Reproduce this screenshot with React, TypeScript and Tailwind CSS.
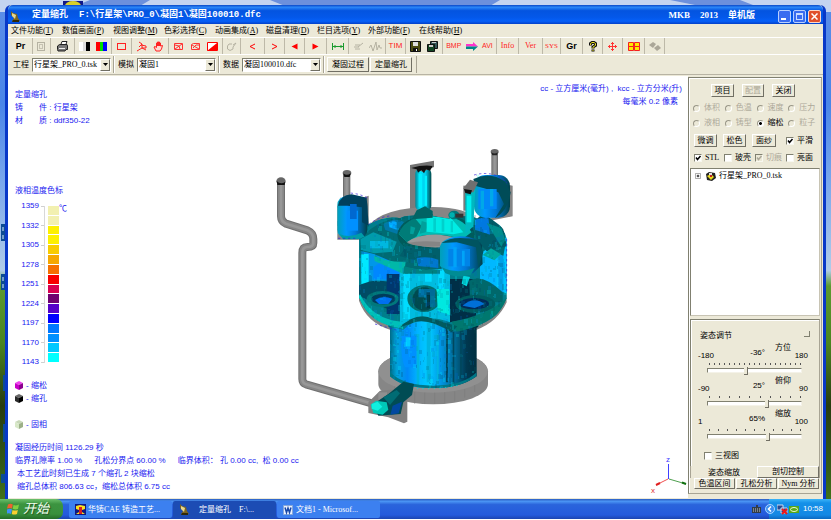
import React from "react";

const SONG = "font-[family-name:'Liberation_Serif','Noto_Sans_CJK_SC',serif]";
const HEI = "font-[family-name:'Liberation_Sans','Noto_Sans_CJK_SC',sans-serif]";
const MONO = "font-[family-name:'Liberation_Mono','Noto_Sans_CJK_SC',monospace]";

/* ---------- toolbar ---------- */

function Group({ className, children }: { className: string; children: React.ReactNode }) {
  return (
    <div className={`flex h-full shrink-0 items-center justify-around border-r border-[#bdb9a8] px-[1px] ${className}`}>
      {children}
    </div>
  );
}

function Tool({ label, children }: { label: string; children: React.ReactNode }) {
  return (
    <button type="button" aria-label={label} className="flex h-[14px] items-center justify-center">
      {children}
    </button>
  );
}

function Ico({ w = 11, children }: { w?: number; children: React.ReactNode }) {
  return (
    <svg width={w} height="11" viewBox={`0 0 ${w} 11`} fill="none">
      {children}
    </svg>
  );
}

function TextTool({ text, className }: { text: string; className: string }) {
  return (
    <button type="button" className={`leading-[14px] ${className}`}>
      {text}
    </button>
  );
}

function Toolbar() {
  return (
    <div className="flex h-[17px] items-center border-t border-white pl-[1px] text-[8px]">
      <Group className="w-[24px]">
        <TextTool text="Pr" className={`text-[9px] font-bold text-black ${HEI}`} />
      </Group>
      <Group className="w-[18px]">
        <Tool label="页面">
          <Ico>
            <rect x="1.5" y="1.5" width="7" height="8" stroke="#b5b2a2" />
            <rect x="3.5" y="3.5" width="3" height="4" stroke="#c5c2b2" />
          </Ico>
        </Tool>
      </Group>
      <Group className="w-[24px]">
        <Tool label="打印">
          <Ico>
            <path d="M3.5 4.5 5 .5h5L8.5 4.500" fill="#fff" stroke="#222" />
            <path d="M.5 5 2.500 3.500H10L10.500 5V8.500H9L8 10H1L.5 8.500Z" fill="#777" stroke="#222" />
            <path d="M2 7.500h6" stroke="#eee" />
          </Ico>
        </Tool>
      </Group>
      <Group className="w-[37px]">
        <Tool label="灰度">
          <Ico>
            <path d="M0 1h4v9H0z" fill="#fff" />
            <path d="M4 1h3v9H4z" fill="#ddd" />
            <path d="M7 1h4v9H7z" fill="#000" />
          </Ico>
        </Tool>
        <Tool label="彩色">
          <Ico>
            <path d="M0 1h4v9H0z" fill="#f00" />
            <path d="M4 1h4v9H4z" fill="#0d0" />
            <path d="M7 1h4v9H7z" fill="#00f" />
          </Ico>
        </Tool>
      </Group>
      <Group className="w-[20px]">
        <Tool label="窗口">
          <Ico>
            <rect x="1.5" y="2.500" width="8" height="6" stroke="#f22" />
          </Ico>
        </Tool>
      </Group>
      <Group className="w-[37px]">
        <Tool label="旋转">
          <Ico>
            <path d="M3 1l3 2-3 3M6 3v4L1 10M6 7l4 2M5 4l5 1v2H6" stroke="#f22" />
          </Ico>
        </Tool>
        <Tool label="平移">
          <Ico>
            <path d="M3 10 1 6l1-.5 1.500 1V2h1v3V1h1v4V1h1v4V2h1v3l2-.5L8.500 8 7 10Z" fill="#ffd8d0" stroke="#f22" />
          </Ico>
        </Tool>
      </Group>
      <Group className="w-[54px]">
        <Tool label="剖面一">
          <Ico>
            <path d="M1.500 2.500h8v6h-8zM2 8l7-5M2 4l4 1 1 3" stroke="#f33" />
          </Ico>
        </Tool>
        <Tool label="剖面二">
          <Ico>
            <path d="M1.500 8.500v-5l2-1h6v6zM2 4l7 4M3 7l3-3h3" stroke="#f33" />
          </Ico>
        </Tool>
        <Tool label="剖面三">
          <Ico>
            <path d="M.5 1.500h10v8H.5z" fill="#fff" stroke="#f00" />
            <path d="M10 2v8H0Z" fill="#f00" />
          </Ico>
        </Tool>
      </Group>
      <Group className="w-[18px]">
        <Tool label="刷新">
          <Ico>
            <path d="M6 3H3L1.500 5v3L4 9.500 7 8V6l3-4-3 2" stroke="#b5b2a2" />
          </Ico>
        </Tool>
      </Group>
      <Group className="w-[24px]">
        <Tool label="上一步">
          <Ico w={7}>
            <path d="M6 3 1 5.500 6 8" stroke="#f00" />
          </Ico>
        </Tool>
      </Group>
      <Group className="w-[20px]">
        <Tool label="下一步">
          <Ico w={7}>
            <path d="M1 3l5 2.500L1 8" stroke="#f00" />
          </Ico>
        </Tool>
      </Group>
      <Group className="w-[20px]">
        <Tool label="倒放">
          <Ico w={7}>
            <path d="M6.500 2.500v6L.5 5.500Z" fill="#f00" />
          </Ico>
        </Tool>
      </Group>
      <Group className="w-[22px]">
        <Tool label="播放">
          <Ico w={7}>
            <path d="M.5 2.500v6l6-3Z" fill="#f00" />
          </Ico>
        </Tool>
      </Group>
      <Group className="w-[22px]">
        <Tool label="测距">
          <Ico w={12}>
            <path d="M.5 2v7M11.500 2v7M1 5.500h10M3 4v3M9 4v3" stroke="#1a9a2e" />
          </Ico>
        </Tool>
      </Group>
      <Group className="w-[37px]">
        <Tool label="标注">
          <Ico>
            <path d="M10 2 5 6M2 4h5M1 6h5M2 8h5" stroke="#b5b2a2" />
          </Ico>
        </Tool>
        <Tool label="曲线">
          <Ico w={13}>
            <path d="M0 7 2 4l2 6 3-9 1 8 2-5 1 3h2" stroke="#b5b2a2" />
          </Ico>
        </Tool>
      </Group>
      <Group className="w-[20px]">
        <TextTool text="TIM" className={`text-[#f22] ${HEI}`} />
      </Group>
      <Group className="w-[37px]">
        <Tool label="保存">
          <Ico>
            <path d="M.5.5h10v10H.5z" fill="#4a4a10" stroke="#111" />
            <path d="M3 1h5v4H3z" fill="#ddd" />
            <path d="M3 7h5v3H3z" fill="#111" />
            <path d="M6 8h1v2H6z" fill="#fff" />
          </Ico>
        </Tool>
        <Tool label="全部保存">
          <Ico>
            <path d="M3.500 3V.5h7v7H8" fill="#355" stroke="#111" />
            <path d="M.5 3.500h7v7h-7z" fill="#142" stroke="#111" />
            <path d="M2 4h4v2H2zM5 1h4v1H5z" fill="#ccc" />
          </Ico>
        </Tool>
      </Group>
      <Group className="w-[54px]">
        <TextTool text="BMP" className={`text-[7px] text-[#f22] ${HEI}`} />
        <Tool label="转换">
          <Ico w={12}>
            <path d="M0 3h7V1l5 4.500H0z" fill="#f3c" />
            <path d="M0 5.500h12L7 10V8H0z" fill="#088" />
          </Ico>
        </Tool>
        <TextTool text="AVI" className={`text-[7px] text-[#f22] ${HEI}`} />
      </Group>
      <Group className="w-[22px]">
        <TextTool text="Info" className={`text-[#f22] ${SONG}`} />
      </Group>
      <Group className="w-[24px]">
        <TextTool text="Ver" className={`text-[#f22] ${SONG}`} />
      </Group>
      <Group className="w-[18px]">
        <TextTool text="SYS" className={`text-[7px] text-[#f22] ${SONG}`} />
      </Group>
      <Group className="w-[22px]">
        <TextTool text="Gr" className={`text-[9px] font-bold text-black ${HEI}`} />
      </Group>
      <Group className="w-[20px]">
        <Tool label="帮助">
          <Ico w={8}>
            <path d="M1.500 4.500V2.500L3 1.500h2l1.500 1v2L4 6v1.500M4 8.500v2" stroke="#111" strokeWidth="3" />
            <path d="M1.500 4V2.500L3 1.500h2l1.500 1v2L4 6v1.500M4 9v1" stroke="#e8e020" />
          </Ico>
        </Tool>
      </Group>
      <Group className="w-[20px]">
        <Tool label="居中">
          <Ico w={9}>
            <path d="M4.500 1v9M0 5.500h9M3 2.500h3M3 8.500h3M1.500 4v3M7.500 4v3" stroke="#f33" />
          </Ico>
        </Tool>
      </Group>
      <Group className="w-[22px]">
        <Tool label="四视图">
          <Ico w={12}>
            <path d="M.5 1.500h5v4h-5zM6.500 1.500h5v4h-5zM.5 5.500h5v4h-5zM6.500 5.500h5v4h-5z" fill="#ffe800" stroke="#f52020" />
          </Ico>
        </Tool>
      </Group>
      <Group className="w-[20px]">
        <Tool label="图层">
          <Ico w={12}>
            <path d="M4 1 7 3 4 7 0 4Z" fill="#aaa698" />
            <path d="M9 4l3 3-4 3-3-3Z" fill="#aaa698" />
          </Ico>
        </Tool>
      </Group>
    </div>
  );
}

/* ---------- selector row ---------- */

function Picker({ id, label, value }: { id: string; label: string; value: string }) {
  return (
    <div className="flex h-full w-[105px] shrink-0 items-center gap-[3px] border-r border-[#a8a494] pl-[4px] shadow-[1px_0_0_#fff]">
      <label htmlFor={id} className="w-4 shrink-0">
        {label}
      </label>
      <div className="relative">
        <select
          id={id}
          className={`block h-[14px] w-[79px] appearance-none border border-b-white border-l-[#808070] border-r-white border-t-[#808070] bg-white pl-[1px] text-[8px] leading-[12px] text-black outline-none ${SONG}`}
        >
          <option>{value}</option>
        </select>
        <span className="pointer-events-none absolute right-[1px] top-[1px] flex h-3 w-[10px] items-center justify-center border border-b-[#716f64] border-l-white border-r-[#716f64] border-t-white bg-[#ece9d8]">
          <svg width="5" height="3" viewBox="0 0 5 3">
            <path d="M0 0h5L2.500 3Z" fill="#000" />
          </svg>
        </span>
      </div>
    </div>
  );
}

function Raised({ children, className = "", disabled = false }: { children: React.ReactNode; className?: string; disabled?: boolean }) {
  return (
    <button
      type="button"
      disabled={disabled}
      className={`shrink-0 whitespace-nowrap border border-b-[#716f64] border-l-white border-r-[#716f64] border-t-white bg-[#ece9d8] text-center disabled:text-[#aca899] ${className}`}
    >
      {children}
    </button>
  );
}

/* ---------- model ---------- */

const OUTLINE =
  "M297 300 L232 296 Q228 190 240 176 Q262 160 322 174 L326 256 Q380 226 420 238 L470 214 L466 96 Q488 88 514 98 L512 212 L520 232 L570 240 Q560 214 600 216 L614 220 L616 156 L645 148 L642 108 Q690 98 738 130 Q756 160 752 205 Q730 236 700 240 Q732 262 740 300 L740 478 Q712 545 650 566 L650 712 Q600 748 520 748 Q430 748 390 712 L390 566 Q322 540 297 475 Z";

const SHADES = ["#003a5c", "#005a64", "#00809a", "#0090f0", "#00c8ff", "#00ffff", "#009a9a", "#004c4c", "#0060c8"];

function makeFacets() {
  let seed = 17;
  const next = () => {
    seed = (seed * 16807) % 2147483647;
    return seed / 2147483647;
  };
  return Array.from({ length: 1500 }, () => ({
    x: Math.round(225 + next() * 530),
    y: Math.round(90 + next() * 660),
    w: Math.round(3 + next() * 7),
    h: Math.round(4 + next() * 14),
    c: SHADES[Math.floor(next() * SHADES.length)],
  }));
}

const FACETS = makeFacets();

function Pipe({ d, w }: { d: string; w: number }) {
  return (
    <g fill="none" strokeLinejoin="round">
      <path d={d} stroke="#707070" strokeWidth={w} />
      <path d={d} stroke="#878787" strokeWidth={w - 6} />
      <path d={d} stroke="#989898" strokeWidth={w / 3} />
    </g>
  );
}

function CastingModel() {
  return (
    <svg className="absolute left-[252px] top-[63px]" width="270" height="290" viewBox="0 0 810 870" role="img" aria-label="行星架">
      <defs>
        <clipPath id="body">
          <path d={OUTLINE} />
        </clipPath>
        <linearGradient id="column" x1="390" x2="650" y1="0" y2="0" gradientUnits="userSpaceOnUse">
          <stop offset="0" stopColor="#006c88" />
          <stop offset=".08" stopColor="#00a4dc" />
          <stop offset=".2" stopColor="#0088f8" />
          <stop offset=".32" stopColor="#00b4ff" />
          <stop offset=".45" stopColor="#00ccff" />
          <stop offset=".58" stopColor="#0098e8" />
          <stop offset=".74" stopColor="#006c98" />
          <stop offset=".88" stopColor="#003850" />
          <stop offset="1" stopColor="#003040" />
        </linearGradient>
        <linearGradient id="knob" x1="0" x2="1" y1="0" y2="0">
          <stop offset="0" stopColor="#00a0b8" />
          <stop offset=".3" stopColor="#0098ff" />
          <stop offset=".6" stopColor="#0078d8" />
          <stop offset="1" stopColor="#004048" />
        </linearGradient>
        <linearGradient id="rod" x1="0" x2="1" y1="0" y2="0">
          <stop offset="0" stopColor="#00889a" />
          <stop offset=".3" stopColor="#00e8ff" />
          <stop offset=".65" stopColor="#00c8e8" />
          <stop offset="1" stopColor="#004848" />
        </linearGradient>
      </defs>

      <Pipe w={24} d="M63 128 V232 Q63 248 78 254 L142 274 Q160 282 160 300 V312 Q160 324 142 324 Q127 324 127 342 V720 Q127 732 138 736 L348 797" />
      <ellipse cx="63" cy="126" rx="14" ry="11" fill="#666" />
      <path d="M50 126q12 12 26 2l-2 10H52Z" fill="#111" />
      <Pipe w={22} d="M260 104 V176" />
      <ellipse cx="261" cy="102" rx="13" ry="9" fill="#666" />
      <path d="M250 103q10 9 22 0l-3 11h-16Z" fill="#111" />
      <Pipe w={20} d="M704 40 V122" />
      <ellipse cx="704" cy="38" rx="12" ry="8" fill="#666" />
      <path d="M694 40q10 7 19 0l-2 9h-14Z" fill="#222" />

      <path d="M232 200 L326 170 V270 L300 302 H232Z" fill="#858585" />
      <path d="M700 130 L758 140 V232 L690 245Z" fill="#858585" />
      <path d="M450 78 H490 V232 L450 222Z" fill="#7c7c7c" />
      <path d="M610 140 H630 V215 H610Z" fill="#7c7c7c" />
      <path d="M325 262 Q365 205 520 204 Q620 206 650 240 L730 270 L740 490 Q712 550 650 572 L390 572 Q320 550 297 485 L297 320Z" fill="#858585" />
      <path d="M355 697 a164.500 64 0 0 1 329 0 V735 a164.500 61 0 0 1 -329 0Z" fill="#868686" />
      <ellipse cx="519" cy="697" rx="164" ry="64" fill="#909090" />
      <g stroke="#7c7c7c" strokeWidth="2">
        <path d="M404 742v42M434 754v37M464 759v35M494 761v34M524 761v34M554 760v33M584 757v30M614 750v26M644 738v21" />
      </g>

      <g clipPath="url(#body)">
        <path d="M385 540H655V752H385Z" fill="url(#column)" />
        <path d="M425 590h45v95h-35q-14-30-10-95Z" fill="#0090ff" />
        <path d="M500 550h12v180h-12zM470 585h8v155h-8zM530 585h6v150h-6z" fill="#00b4e0" />
        <path d="M437 595h14v27h-14z" fill="#00c8ff" />
        <path d="M558 570h6v160h-6zM578 560h5v175h-5zM600 560h6v160h-6z" fill="#004860" />
        <path d="M390 700q40 40 130 40t130-40v52H390Z" fill="#007888" />

        <path d="M290 280Q340 235 420 232H620Q740 250 745 310V490Q700 560 580 578Q555 542 500 542Q455 542 430 572Q330 550 290 480Z" fill="#007f8c" />
        <path d="M304 330h116v95H304z" fill="#0098e8" />
        <path d="M304 345h22v90h-22z" fill="#00e8ff" />
        <path d="M340 385l40-28 38 24v40h-78z" fill="#0088ff" />
        <path d="M296 440Q350 410 418 440V525L360 500 296 470Z" fill="#004c64" />
        <path d="M380 405h38v120h-38z" fill="#00386e" />
        <ellipse cx="368" cy="480" rx="48" ry="24" fill="#00787c" />
        <ellipse cx="370" cy="480" rx="36" ry="16" fill="#003c5c" />
        <path d="M345 483q22-16 52-4l-12 16h-28z" fill="#0070f0" />
        <path d="M300 465Q335 540 425 548L430 570Q320 550 290 485Z" fill="#00c0b8" />
        <path d="M420 385h150v165q-70-28-150 8z" fill="#00bce0" />
        <path d="M430 395h20v145h-20zM495 398h20v30h-20zM535 390h18v60h-18z" fill="#00dcff" />
        <ellipse cx="492" cy="479" rx="50" ry="40" fill="#007070" />
        <ellipse cx="492" cy="480" rx="34" ry="35" fill="#004c50" />
        <path d="M475 450h50v55h-28v-30h-22z" fill="#006c98" />
        <path d="M500 460h10v48h-10z" fill="#003844" />
        <path d="M530 450h38v78l-35-12z" fill="#00e8e0" />
        <path d="M570 420h78v115l-78 15z" fill="#003048" />
        <path d="M648 330L742 295V465L690 440Z" fill="#00c4ff" />
        <path d="M660 360l50-25v105l-50-15z" fill="#00b8ff" />
        <path d="M715 320h15v140h-15z" fill="#00a0e8" />
        <path d="M628 425q40-22 100 35v30H630z" fill="#00686c" />
        <ellipse cx="646" cy="495" rx="60" ry="27" fill="#005c60" />
        <ellipse cx="642" cy="494" rx="45" ry="17" fill="#002c58" />
        <path d="M608 500q34-30 66-5l-30 12z" fill="#0070d8" />
        <path d="M610 410l20 4-10 28-15-8z" fill="#00d8e0" />
        <path d="M575 548Q685 528 742 475L740 495Q690 560 590 578Z" fill="#007870" />
        <path d="M420 565Q470 515 520 540L592 562 575 580 Q510 540 470 548Z" fill="#005c60" />

        <path d="M302 300Q350 235 470 228H590Q700 242 738 308L730 350 680 330 648 355 540 390Q460 402 400 370L342 345 300 335Z" fill="#006c74" />
        <path d="M370 255q32-22 62-6l-20 36-36-12z" fill="#0078a8" />
        <path d="M386 250q15-6 24 0v22l-22-7z" fill="#00a8ff" />
        <path d="M302 300l38-20 70 28-12 30-55 5-40-10z" fill="#009cac" />
        <path d="M330 306h55v22h-55z" fill="#00b8e0" />
        <ellipse cx="528" cy="287" rx="116" ry="63" fill="#005c5c" />
        <path d="M440 320q40 12 105 4v50h-45l-82-23z" fill="#00606c" />
        <path d="M470 358q30-8 65 4v25l-60-6z" fill="#0078d0" />
        <path d="M342 350q50 22 95 18l-5 38-88-40z" fill="#00b8a8" />
        <path d="M432 382q45 14 108 10v12H430z" fill="#008080" />
        <path d="M640 250l30-28 60 45 10 55-60 15-30-35z" fill="#005c68" />
        <path d="M645 242l40-10 5 55-45-15z" fill="#0078e0" />
        <path d="M680 252l44 15 12 36-12 20z" fill="#008c8c" />
        <path d="M668 348l25-20 30 18-20 18z" fill="#00a8a0" />

        <g opacity=".2" shapeRendering="crispEdges">
          {FACETS.map((f, i) => (
            <rect key={i} x={f.x} y={f.y} width={f.w} height={f.h} fill={f.c} />
          ))}
        </g>

        <path d="M416 285Q445 228 530 228Q610 232 634 280L605 302Q555 280 485 290L442 310Z" fill="#00bcb4" />
        <path d="M416 285Q428 252 465 238L485 262 470 292 442 310Z" fill="#007c78" />
        <path d="M485 246l20 6-8 28-18 4zM452 262l14 4-6 20-10-2z" fill="#00a09c" />
        <path d="M500 234h70l40 46-30 6-80-8z" fill="#00ece4" />
        <path d="M520 238h8v40h-8zM545 240h8v38h-8zM572 246h7v34h-7z" fill="#00d0cc" />
        <path d="M440 310Q475 284 540 287L602 298 540 325Q490 328 440 310Z" fill="#999" />
        <path d="M442 312Q480 304 540 309v13q-60 5-98-10z" fill="#858585" />
      </g>

      <rect x="232" y="172" width="90" height="126" rx="26" fill="url(#knob)" />
      <path d="M234 200Q240 168 275 166L320 176 326 260 306 250V205L262 200Z" fill="#00405c" />
      <path d="M260 215h34v60h-34z" fill="#0090ff" />
      <path d="M270 195h20v45h-20z" fill="#0068d0" />
      <path d="M238 285q30 14 66-4l10 12-20 8h-45z" fill="#009ca8" />

      <rect x="466" y="90" width="48" height="124" rx="14" fill="url(#rod)" />
      <path d="M476 105h10v98h-10zM494 110h7v90h-7z" fill="#00f0ff" />
      <path d="M470 214l25-12 23 14v20l-62 5z" fill="#006464" />
      <path d="M450 78 L522 65 V84 L488 98 L450 86Z" fill="#747474" />
      <path d="M454 87q34-10 64-6l-8 14-12-4-6 12-8-10-10 8-4-10Z" fill="#111" />

      <rect x="642" y="108" width="108" height="128" rx="34" fill="url(#knob)" />
      <path d="M640 120Q690 95 735 128L752 160Q745 215 705 238L732 195 715 160 645 140Z" fill="#004c58" />
      <path d="M655 150h55v60h-55z" fill="#0088f8" />
      <path d="M662 155h10v55h-10zM690 150h10v52h-10z" fill="#00a8e8" />
      <path d="M616 158L646 150 640 262 616 285Z" fill="#00b8c0" />
      <path d="M620 170h14v80h-14z" fill="#00f0f0" />
      <path d="M610 148L630 122 654 130 640 160 616 160Z" fill="#707070" />
      <path d="M612 150l24 4-4 12-16-4z" fill="#111" />

      <ellipse cx="582" cy="228" rx="17" ry="13" fill="#00787c" />
      <ellipse cx="576" cy="228" rx="8" ry="8" fill="#00b0b0" />
      <path d="M586 224h24v12h-24z" fill="#333" />

      <path d="M540 322Q548 296 600 292Q650 292 666 318L668 375 640 402Q600 418 558 402L540 380Z" fill="url(#knob)" />
      <path d="M545 312Q580 286 655 304L670 340 655 385 648 325 590 310Z" fill="#005460" />
      <path d="M565 330h65v52h-65z" fill="#0084e8" />
      <path d="M580 325h10v60h-10zM606 335h8v45h-8z" fill="#00a4f8" />
      <path d="M546 385q45 22 98 2l-12 20q-40 12-76-4z" fill="#008c94" />

      <g fill="none" stroke="#3a20d8" strokeWidth="2" strokeDasharray="7 8">
        <path d="M272 162l25 4 25 10M326 256q34-24 66-25M642 108q60-16 100 24M740 300v165M234 298h60M345 555l70 20" />
      </g>
      <g stroke="#00e8e0" strokeWidth="3" strokeDasharray="3 14">
        <path d="M420 742q90 16 180-4" fill="none" />
      </g>

      <path d="M325 790L360 755 442 748V848L432 853 385 835 325 822Z" fill="#808080" />
      <path d="M355 760h26v45h-26z" fill="#909090" />
      <path d="M340 795L385 765 410 745 430 728 462 735 456 768 430 790 422 825 355 830Z" fill="#004c54" />
      <path d="M370 775l40-22 10 10-30 35z" fill="#006c74" />
      <path d="M398 800l28-12-10 35-25 4z" fill="#0048a0" />
      <path d="M332 797L348 785 380 790 385 812 368 827 340 822Z" fill="#00c8b8" />
      <path d="M335 795l18-7 14 15-14 12-18-6z" fill="#10f0e0" />
    </svg>
  );
}

/* ---------- drawing area ---------- */

const SCALE_LABELS = ["1359", "1332", "1305", "1278", "1251", "1224", "1197", "1170", "1143"];
const SCALE_CELLS = [
  "bg-[#f2f0b0]",
  "bg-[#f2f0b0]",
  "bg-[#fdf000]",
  "bg-[#fdf000]",
  "bg-[#f8cc00]",
  "bg-[#f5a800]",
  "bg-[#f57000]",
  "bg-[#f80000]",
  "bg-[#d80050]",
  "bg-[#700070]",
  "bg-[#5500c8]",
  "bg-[#0000ff]",
  "bg-[#0078ff]",
  "bg-[#0090ff]",
  "bg-[#00c8ff]",
  "bg-[#00ffff]",
];

function Cube({ top, left, right }: { top: string; left: string; right: string }) {
  return (
    <svg width="8" height="9" viewBox="0 0 8 9">
      <path d="M0 2 4 0l4 2-4 2Z" fill={top} />
      <path d="M0 2l4 2v5L0 7Z" fill={left} />
      <path d="M8 2 4 4v5l4-2Z" fill={right} />
    </svg>
  );
}

function Canvas() {
  return (
    <main className={`relative min-w-0 flex-1 overflow-hidden bg-white pb-1 pl-[7px] text-[8px] leading-[13px] text-[#2020f0] ${HEI}`}>
      <CastingModel />
      <div className="flex justify-between pr-[6px]">
        <div className="pt-[12px]">
          <p>定量缩孔</p>
          <p className="flex">
            <span className="w-6">铸</span>件 : 行星架
          </p>
          <p className="flex">
            <span className="w-6">材</span>质 : ddf350-22
          </p>
        </div>
        <div className="pt-[6px] text-right">
          <p>cc - 立方厘米(毫升) ,&nbsp; kcc - 立方分米(升)</p>
          <p className="pr-1">每毫米 0.2 像素</p>
        </div>
      </div>
      <p className="mt-[57px]">液相温度色标</p>
      <div className="mt-[5px] flex">
        <div className="flex h-[164px] w-6 flex-col justify-between text-right leading-[8px]">
          {SCALE_LABELS.map((t) => (
            <span key={t}>{t}</span>
          ))}
        </div>
        <div className="ml-[2px] flex h-[157px] w-1 flex-col justify-between self-center border-r border-[#d8d8d8]">
          {SCALE_LABELS.map((t) => (
            <span key={t} className="h-px bg-[#d0d0d0]" />
          ))}
        </div>
        <div className="ml-[3px] flex h-[156px] w-[11px] flex-col gap-px self-center">
          {SCALE_CELLS.map((c, i) => (
            <span key={i} className={`flex-1 ${c}`} />
          ))}
        </div>
        <span>℃</span>
      </div>
      <div className="mt-[13px]">
        <p className="flex items-center gap-[3px]">
          <Cube top="#f040f0" left="#c800c8" right="#8c0090" />- 缩松
        </p>
        <p className="flex items-center gap-[3px]">
          <Cube top="#666" left="#2a2a2a" right="#000" />- 缩孔
        </p>
        <p className="mt-[13px] flex items-center gap-[3px]">
          <Cube top="#c8d8b8" left="#d8e8c8" right="#9cb088" />- 固相
        </p>
      </div>
      <div className="mt-[10px]">
        <p>凝固经历时间 1126.29 秒</p>
        <p className="flex gap-3">
          <span>临界孔隙率 1.00 %</span>
          <span>孔松分界点 60.00 %</span>
          <span>临界体积： 孔 0.00 cc, &nbsp;松 0.00 cc</span>
        </p>
        <p className="pl-[2px]">本工艺此时刻已生成 7 个缩孔 2 块缩松</p>
        <p className="pl-[2px]">缩孔总体积 806.63 cc，缩松总体积 6.75 cc</p>
      </div>
      <svg className="absolute bottom-0 right-0" width="40" height="48" viewBox="0 0 40 48" fill="none">
        <path d="M20.500 14v15" stroke="#4040ff" />
        <path d="M20 29 8 35" stroke="#f05050" />
        <path d="M12 33l-4 2" stroke="#e02020" strokeWidth="2" />
        <path d="M21 29l17 5" stroke="#50a050" />
        <path d="M34 32.500l4 1.500" stroke="#107010" strokeWidth="2" />
        <text x="18" y="12" fontSize="8" fill="#4040ff">
          z
        </text>
        <text x="3" y="43" fontSize="8" fill="#e03030">
          x
        </text>
      </svg>
    </main>
  );
}

/* ---------- control panel ---------- */

function Radio({ label, checked = false, disabled = true }: { label: string; checked?: boolean; disabled?: boolean }) {
  return (
    <label className={`flex items-center gap-1 whitespace-nowrap ${disabled ? "text-[#aca899]" : "text-black"}`}>
      <input
        type="radio"
        name="field"
        defaultChecked={checked}
        disabled={disabled}
        className="size-[7px] shrink-0 appearance-none rounded-full border border-b-white border-l-[#9a9788] border-r-white border-t-[#9a9788] bg-white checked:bg-[radial-gradient(circle,#000_35%,#fff_45%)] disabled:bg-[#ece9d8]"
      />
      {label}
    </label>
  );
}

function Check({ label, checked = false, disabled = false }: { label: string; checked?: boolean; disabled?: boolean }) {
  return (
    <label className={`flex items-center gap-[3px] whitespace-nowrap ${disabled ? "text-[#aca899]" : "text-black"}`}>
      <span className="relative block size-2 shrink-0">
        <input
          type="checkbox"
          defaultChecked={checked}
          disabled={disabled}
          className="peer block size-2 appearance-none border border-b-[#f8f8f0] border-l-[#808070] border-r-[#f8f8f0] border-t-[#808070] bg-white disabled:bg-[#ece9d8]"
        />
        <svg className="pointer-events-none absolute inset-0 hidden peer-checked:block" width="8" height="8" viewBox="0 0 8 8" fill="none">
          <path d="M2 3.500 3.500 5.500 6.500 2" stroke="currentColor" strokeWidth="1.500" />
        </svg>
      </span>
      {label}
    </label>
  );
}

function Slider({ id, name, min, max, value, unit, ticks }: { id: string; name: string; min: number; max: number; value: number; unit: string; ticks: number }) {
  return (
    <div className="h-[33px]">
      <div className="flex h-4 items-start leading-[8px]">
        <span className="w-[26px] pl-[7px] pt-2">{min}</span>
        <output htmlFor={id} className="w-[48px] pt-[5px] text-right">
          {value}
          {unit}
        </output>
        <label htmlFor={id} className="ml-[10px] whitespace-nowrap">
          {name}
        </label>
        <span className="ml-auto pr-[11px] pt-2">{max}</span>
      </div>
      <div className="ml-[18px] mr-[18px] mt-[3px] flex justify-between">
        {Array.from({ length: ticks }, (_, i) => (
          <span key={i} className="h-[2px] w-px bg-[#555]" />
        ))}
      </div>
      <input
        id={id}
        type="range"
        min={min}
        max={max}
        defaultValue={value}
        className="ml-[16px] mt-[3px] block h-[5px] w-[95px] appearance-none border border-b-[#f4f2e8] border-l-[#808070] border-r-[#f4f2e8] border-t-[#808070] bg-white [&::-webkit-slider-thumb]:h-2 [&::-webkit-slider-thumb]:w-1 [&::-webkit-slider-thumb]:appearance-none [&::-webkit-slider-thumb]:border-b [&::-webkit-slider-thumb]:border-r [&::-webkit-slider-thumb]:border-[#716f64] [&::-webkit-slider-thumb]:bg-[#ece9d8]"
      />
    </div>
  );
}

function ControlPanel() {
  return (
    <aside
      className={`mb-1 mr-[1px] mt-[1px] flex w-[134px] shrink-0 flex-col border border-b-[#a8a494] border-l-[#808070] border-r-[#a8a494] border-t-[#808070] bg-[#ece9d8] px-[1px] pb-1 text-[8px] leading-[10px] shadow-[inset_1px_1px_0_#fff] ${SONG}`}
    >
      <div className="mt-[6px] flex justify-center gap-2 pr-1">
        <Raised className="h-[13px] w-[23px]">项目</Raised>
        <Raised className="h-[13px] w-[22px]" disabled>
          配置
        </Raised>
        <Raised className="h-[13px] w-[23px]">关闭</Raised>
      </div>
      <div className="mt-[6px] grid grid-cols-4 gap-y-[5px] pl-[3px]">
        <Radio label="体积" />
        <Radio label="色温" />
        <Radio label="速度" />
        <Radio label="压力" />
        <Radio label="液相" />
        <Radio label="铸型" />
        <Radio label="缩松" checked disabled={false} />
        <Radio label="粒子" />
      </div>
      <div className="mt-[6px] flex items-center gap-[6px] pl-1">
        <Raised className="h-[13px] w-[23px]">微调</Raised>
        <Raised className="h-[13px] w-[23px]">松色</Raised>
        <Raised className="h-[13px] w-[24px]">面纱</Raised>
        <div className="pl-[4px]">
          <Check label="平滑" checked />
        </div>
      </div>
      <div className="mt-[6px] grid grid-cols-[30px_31px_31px_1fr] pl-[4px]">
        <Check label="STL" checked />
        <Check label="玻壳" />
        <Check label="切痕" checked disabled />
        <Check label="亮面" />
      </div>
      <div className="mt-[5px] min-h-[142px] flex-1 border border-b-[#c8c4b4] border-l-[#808070] border-r-[#c8c4b4] border-t-[#808070] bg-white pl-1 pt-[2px]">
        <div className="flex items-center">
          <button type="button" aria-label="展开" className="mr-[5px]">
            <svg width="6" height="6" viewBox="0 0 7 7" fill="none">
              <path d="M.5.5h6v6h-6z" stroke="#999" />
              <path d="M2 3.500h3M3.500 2v3" stroke="#000" />
            </svg>
          </button>
          <svg width="10" height="9" viewBox="0 0 10 9" className="mr-[3px]">
            <path d="M0 2 3 0l6 1 1 5-4 3-5-1Z" fill="#222" />
            <path d="M1 4l4-2 3 3-3 3Z" fill="#e8d820" />
            <path d="M3 1h3v2H3z" fill="#ddd" />
            <path d="M4 3h2v2H4z" fill="#c02020" />
          </svg>
          <span>行星架_PRO_0.tsk</span>
        </div>
      </div>
      <div className="mt-[3px] border border-b-0 border-l-[#808070] border-r-[#a8a494] border-t-[#808070] pb-[5px] shadow-[inset_1px_1px_0_#fff]">
        <div className={HEI}>
          <div className="flex h-[20px] justify-between pl-[9px] pr-[9px] pt-[11px]">
            <h2>姿态调节</h2>
            <span className="size-[6px] border-b border-r border-[#808070]" />
          </div>
          <div className="mt-[4px] flex flex-col">
            <Slider id="yaw" name="方位" min={-180} max={180} value={-36} unit="°" ticks={19} />
            <Slider id="pitch" name="俯仰" min={-90} max={90} value={25} unit="°" ticks={10} />
            <Slider id="zoom" name="缩放" min={1} max={100} value={65} unit="%" ticks={11} />
          </div>
          <div className="mt-[8px] flex pl-[13px]">
            <Check label="三视图" />
          </div>
        </div>
      </div>
      <div className="flex shrink-0 items-start border-l border-r border-[#a8a494] pl-[17px]">
        <button type="button" className="w-8 whitespace-nowrap pt-[2px]">
          姿态缩放
        </button>
        <Raised className="ml-auto h-[12px] w-[62px]">剖切控制</Raised>
      </div>
      <div className="flex shrink-0 justify-between pl-[4px] pr-[1px]">
        <Raised className="h-[11px] w-[41px] leading-[9px]">色温区间</Raised>
        <Raised className="h-[11px] w-[41px] leading-[9px]">孔松分析</Raised>
        <Raised className="h-[11px] w-[41px] leading-[9px]">Nym 分析</Raised>
      </div>
    </aside>
  );
}

/* ---------- window frame ---------- */

const MENU = ["文件功能", "数值画面", "视图调整", "色彩选择", "动画集成", "磁盘清理", "栏目选项", "外部功能", "在线帮助"];
const KEYS = ["T", "P", "M", "C", "A", "D", "Y", "F", "H"];

function AppGlyph() {
  return (
    <svg width="10" height="11" viewBox="0 0 10 11">
      <path d="M1 0 3 2l4 1 1 4 2 3H2l2-3-3-3Z" fill="#7a6420" />
      <path d="M2 2l4 2-1 4-3-3Z" fill="#e8d890" />
      <path d="M3 9h6v2H2Z" fill="#302808" />
    </svg>
  );
}

function TitleBar() {
  return (
    <header
      className={`flex h-[19px] items-center rounded-t-[5px] bg-[linear-gradient(#0a48c8,#2a86f8_12%,#0454e0_30%,#0458ea_65%,#0660f8_85%,#0440c8)] pl-[2px] pt-[3px] text-[9px] font-bold text-white ${MONO}`}
    >
      <AppGlyph />
      <h1 className="ml-[12px] flex gap-[11px] whitespace-pre">
        <span>定量缩孔</span>
        <span>F:\行星架\PRO_0\凝固1\凝固100010.dfc</span>
      </h1>
      <div className={`ml-auto mr-[23px] flex gap-[10px] text-[9px] ${SONG}`}>
        <span>MKB</span>
        <span>2013</span>
        <span>单机版</span>
      </div>
      <div className="mr-[2px] flex gap-[2px]">
        <button type="button" aria-label="最小化" className="flex size-[13px] items-end rounded-[2px] border border-[#b8d0ff] bg-[#3a6cf0] p-[2px]">
          <span className="h-[2px] w-[5px] bg-white" />
        </button>
        <button type="button" aria-label="最大化" className="flex size-[13px] items-center justify-center rounded-[2px] border border-[#b8d0ff] bg-[#3a6cf0]">
          <span className="size-[7px] border border-t-2 border-[#c8dcff]" />
        </button>
        <button type="button" aria-label="关闭" className="flex size-[13px] items-center justify-center rounded-[2px] border border-[#ffd8c8] bg-[#e0502c]">
          <svg width="7" height="7" viewBox="0 0 7 7">
            <path d="M.5.5l6 6M6.500.5l-6 6" stroke="#fff" strokeWidth="1.500" />
          </svg>
        </button>
      </div>
    </header>
  );
}

function Taskbar() {
  return (
    <footer
      className={`flex h-[21px] shrink-0 items-stretch border-b border-white bg-[linear-gradient(#2a5cc0,#4a94f4_12%,#2a64dc_28%,#245adc_80%,#1c44b0)] text-[8px] text-white ${SONG}`}
    >
      <button
        type="button"
        className={`flex w-[63px] shrink-0 items-center gap-1 rounded-r-[7px] bg-[linear-gradient(#6cc06c,#3c9440_25%,#38903c_75%,#246c28)] pl-[7px] text-[13px] italic leading-[14px] text-[#f0fff0] [text-shadow:1px_1px_1px_#205020] ${HEI}`}
      >
        <svg width="12" height="12" viewBox="0 0 12 12">
          <path d="M1 1.500Q3.500 0 5.800 1.500L5 5.500Q3 4.300 0 5.500Z" fill="#f06030" />
          <path d="M6.500 2Q9 3 12 1.500L11 6Q8.500 7 5.700 5.800Z" fill="#80d040" />
          <path d="M0 6.500Q3 5 5 6.500L4 11Q2 9.500-1 11Z" fill="#4090f8" />
          <path d="M5.500 7Q8 8 10.800 7L10 11Q7 12 4.800 11Z" fill="#f8d030" />
        </svg>
        开始
      </button>
      <div className="flex min-w-0 items-stretch gap-[1px] pb-[1px] pl-[6px] pt-[2px]">
        <button type="button" className="flex w-[103px] items-center gap-[2px] whitespace-pre rounded-[2px] bg-[#3c80f0] pl-[6px]">
          <svg width="11" height="11" viewBox="0 0 11 11">
            <path d="M0 0h11v11H0z" fill="#101880" />
            <path d="M1 2l4-1 5 1v3L7 6v2l3 2H1l3-2V6L1 5Z" fill="#f8e020" />
            <path d="M4 3h3v7H4z" fill="#d82020" />
          </svg>
          华铸CAE 铸造工艺...
        </button>
        <button type="button" className="flex w-[103px] items-center gap-[10px] whitespace-pre rounded-[2px] bg-[#1c4cb4] pl-[6px]">
          <AppGlyph />
          <span>定量缩孔    F:\...</span>
        </button>
        <button type="button" className="flex w-[103px] items-center gap-[3px] whitespace-pre rounded-[2px] bg-[#3c80f0] pl-[6px]">
          <svg width="10" height="10" viewBox="0 0 10 10" fill="none">
            <path d="M.5.5h9v9h-9z" fill="#e8f0ff" stroke="#88a8d8" />
            <path d="M2 2.500l1.500 5L5 3l1.500 4.500L8 2.500" stroke="#1848a8" strokeWidth="1.500" />
          </svg>
          <span>文档1 - Microsof...</span>
        </button>
      </div>
      <div className="ml-auto flex items-center">
        <svg width="9" height="8" viewBox="0 0 9 8" className="mr-[8px]">
          <path d="M0 2h9v6H0z" fill="#333c48" />
          <path d="M1 4h7M1 6h7" stroke="#ccc" strokeDasharray="1 1" />
          <path d="M4 0h2v2H4z" fill="#333c48" />
        </svg>
        <div className="flex h-full w-[62px] items-center bg-[linear-gradient(#3cb4f8,#1490e8_20%,#1488e4_80%,#0c68c0)]">
          <button type="button" aria-label="显示隐藏的图标" className="-ml-1 mr-[2px]">
            <svg width="10" height="10" viewBox="0 0 10 10" fill="none">
              <circle cx="5" cy="5" r="4.500" fill="#3c90f0" stroke="#a8d4ff" />
              <path d="M6 2.500 3.500 5 6 7.500" stroke="#fff" strokeWidth="1.500" />
            </svg>
          </button>
          <svg width="11" height="11" viewBox="0 0 11 11" className="mr-[1px]">
            <path d="M0 1h6v5H0zM4 4h6v5H4z" fill="#284890" stroke="#c8d8f0" />
            <path d="M5 5l5 5M10 5l-5 5" stroke="#f01818" strokeWidth="2" />
          </svg>
          <svg width="10" height="7" viewBox="0 0 10 7" className="mr-[4px]">
            <path d="M0 0h10v7H0z" fill="#58a818" />
            <ellipse cx="5" cy="3.500" rx="3.500" ry="2" fill="none" stroke="#e8f8d0" />
          </svg>
          <time className={HEI}>10:58</time>
        </div>
      </div>
    </footer>
  );
}

export default function App() {
  return (
    <div className="relative flex min-h-screen flex-col bg-[linear-gradient(#5c8ee8,#4a86e8_20%,#7aa8ec_35%,#b0cce8_52%,#5c9a30_55%,#4a8420_66%,#283c10_78%,#345c18_90%,#48801c)]">
      <svg className="absolute inset-x-0 top-0 h-3 w-full" viewBox="0 0 831 12" preserveAspectRatio="none">
        <path d="M0 0h831v12H0z" fill="#6c90dc" />
        <path d="M0 0h90l-30 12H0zM150 0h120l30 12H130zM500 0h170l60 12H480zM740 0h91v12h-60z" fill="#c4d4f0" />
        <path d="M63 1h20v11H63z" fill="#101888" />
        <ellipse cx="73" cy="6" rx="8" ry="5" fill="#d8d028" />
      </svg>
      <svg className="absolute left-0 top-[224px]" width="6" height="270" viewBox="0 0 6 270">
        <path d="M1 0h5v17H1zM1 50h5v16H1zM3 151h3v16H3zM3 200h3v18H3zM1 250h5v9H1z" fill="#0c4c94" />
        <path d="M3 3v4M3 11v4M3 53v4M3 60v4" stroke="#d8ecff" />
      </svg>
      <div className="relative ml-[5px] mr-[5px] mt-[5px] flex flex-1 flex-col rounded-t-[6px] border-x-[3px] border-[#0838c8] bg-[#ece9d8] text-black">
        <TitleBar />
        <nav className={`flex h-[13px] items-center gap-[8px] pl-[3px] text-[8px] leading-[12px] ${SONG}`}>
          {MENU.map((m, i) => (
            <button key={m} type="button" className="w-[43px] shrink-0 whitespace-nowrap text-left">
              {m}(<span className="underline">{KEYS[i]}</span>)
            </button>
          ))}
        </nav>
        <Toolbar />
        <div className={`flex h-[21px] items-center border-b border-t border-b-[#b8b4a4] border-t-white py-[1px] pl-[1px] text-[8px] leading-[10px] ${SONG}`}>
          <Picker id="project" label="工程" value="行星架_PRO_0.tsk" />
          <Picker id="simulation" label="模拟" value="凝固1" />
          <Picker id="data" label="数据" value="凝固100010.dfc" />
          <div className="flex h-full items-center gap-[1px] border-r border-[#a8a494] pl-[3px] pr-[4px]">
            <Raised className="h-[15px] w-[42px]">凝固过程</Raised>
            <Raised className="h-[15px] w-[42px]">定量缩孔</Raised>
          </div>
        </div>
        <div className="flex flex-1 border-b border-b-[#ece9d8] pt-[1px]">
          <Canvas />
          <ControlPanel />
        </div>
      </div>
      <Taskbar />
    </div>
  );
}
